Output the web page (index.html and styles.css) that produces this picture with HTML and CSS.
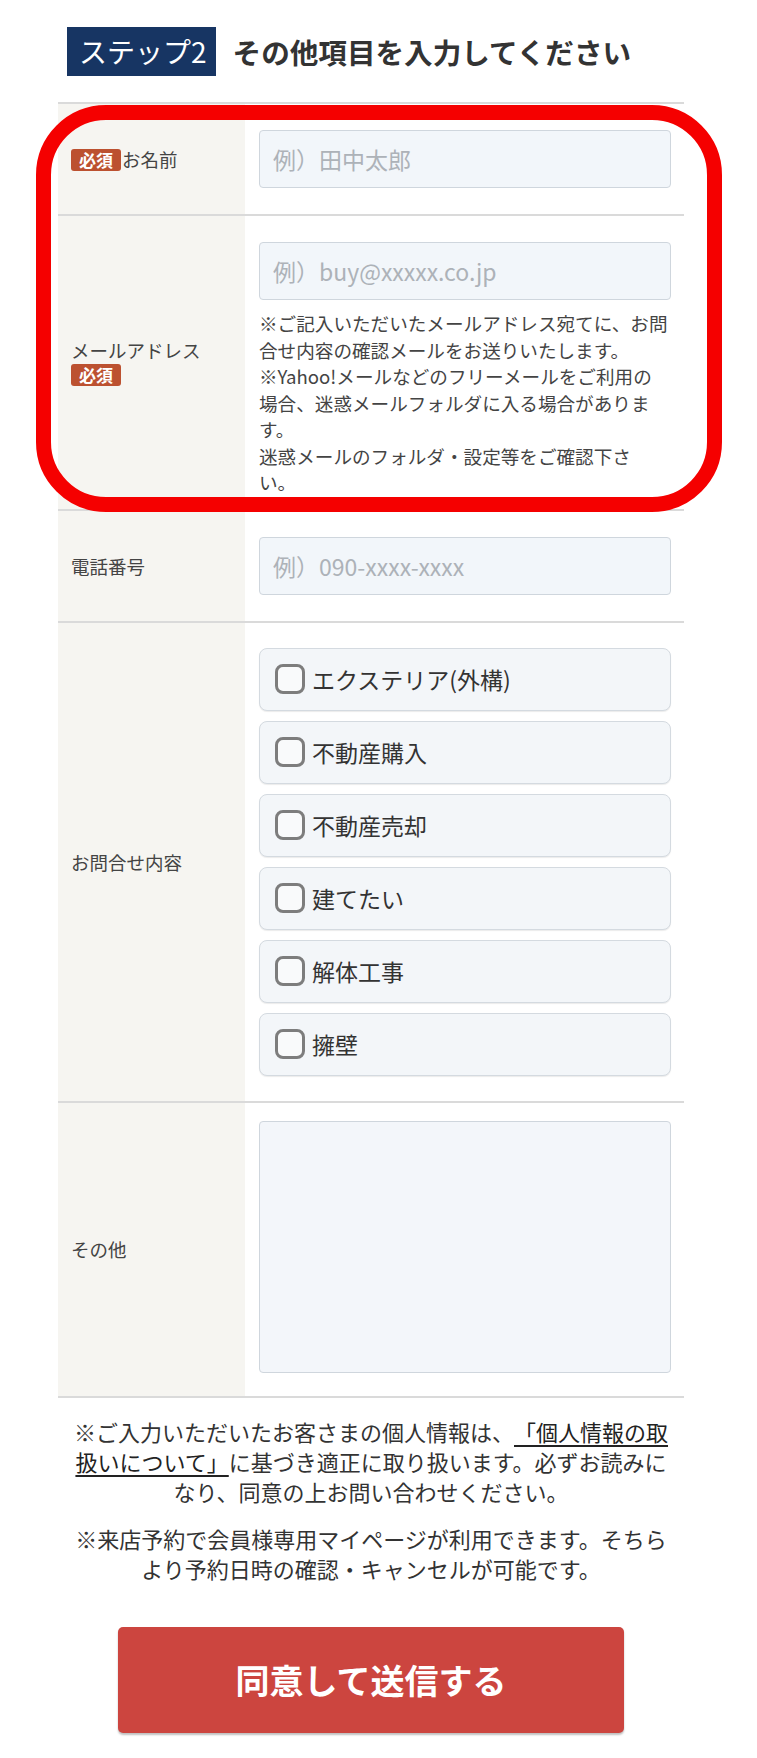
FILE: index.html
```html
<!DOCTYPE html>
<html lang="ja">
    <head>
        <meta charset="UTF-8">
        <meta name="viewport" content="width=device-width, initial-scale=1.0">
        <title>お問い合わせ ステップ2</title>
        <link rel="stylesheet" href="styles.css">
    </head>
    <body>
        <div class="page">
            <h2 class="step-head">
                <span class="step-no">ステップ2</span>
                <span class="step-title">その他項目を入力してください</span>
            </h2>

            <div class="form-table">
                <div class="row">
                    <div class="label">
                        <div><span class="req req-inline">必須</span>お名前</div>
                    </div>
                    <div class="field">
                        <input class="text" type="text" placeholder="例）田中太郎">
                    </div>
                </div>

                <div class="row">
                    <div class="label">
                        <div>メールアドレス</div>
                        <span class="req">必須</span>
                    </div>
                    <div class="field">
                        <input class="text" type="email" placeholder="例）buy@xxxxx.co.jp">
                        <p class="note">※ご記入いただいたメールアドレス宛てに、お問<br>合せ内容の確認メールをお送りいたします。<br>※Yahoo!メールなどのフリーメールをご利用の<br>場合、迷惑メールフォルダに入る場合がありま<br>す。<br>迷惑メールのフォルダ・設定等をご確認下さ<br>い。</p>
                    </div>
                </div>

                <div class="row">
                    <div class="label">
                        <div>電話番号</div>
                    </div>
                    <div class="field">
                        <input class="text" type="tel" placeholder="例）090-xxxx-xxxx">
                    </div>
                </div>

                <div class="row">
                    <div class="label">
                        <div>お問合せ内容</div>
                    </div>
                    <div class="field">
                        <ul class="checks">
                            <li><label class="check"><input type="checkbox"><span class="box"></span>エクステリア(外構)</label></li>
                            <li><label class="check"><input type="checkbox"><span class="box"></span>不動産購入</label></li>
                            <li><label class="check"><input type="checkbox"><span class="box"></span>不動産売却</label></li>
                            <li><label class="check"><input type="checkbox"><span class="box"></span>建てたい</label></li>
                            <li><label class="check"><input type="checkbox"><span class="box"></span>解体工事</label></li>
                            <li><label class="check"><input type="checkbox"><span class="box"></span>擁壁</label></li>
                        </ul>
                    </div>
                </div>

                <div class="row">
                    <div class="label">
                        <div>その他</div>
                    </div>
                    <div class="field">
                        <textarea class="memo"></textarea>
                    </div>
                </div>

                <!-- red marker drawn over the required fields -->
                <div class="highlight"></div>
            </div>

            <div class="notes">
                <p>※ご入力いただいたお客さまの個人情報は、<a href="#">「個人情報の取扱いについて」</a>に基づき適正に取り扱います。必ずお読みになり、同意の上お問い合わせください。</p>
                <p>※来店予約で会員様専用マイページが利用できます。そちらより予約日時の確認・キャンセルが可能です。</p>
            </div>

            <div class="submit-wrap">
                <button type="submit" class="submit">同意して送信する</button>
            </div>
        </div>
    </body>
</html>
```

FILE: styles.css
```css
body, html {
    margin: 0;
    background: #fff;
    font-family: "Noto Sans CJK JP", "Noto Sans", sans-serif;
    color: #333;
}
.page {
    width: 626px;
    padding: 27px 0 20px 58px;
}

/* heading */
.step-head {
    display: flex;
    align-items: center;
    gap: 17px;
    margin: 0 0 26px 9px;
    font-weight: normal;
}
.step-no {
    background-color: #173563;
    color: #fff;
    font-size: 28px;
    line-height: 49px;
    padding: 0 9px 0 12px;
}
.step-title {
    font-size: 28.6px;
    font-weight: bold;
    color: #333;
}

/* table */
.form-table {
    position: relative;
    border-bottom: 2px solid #dadada;
}
.row {
    display: grid;
    grid-template-columns: 187px 1fr;
    border-top: 2px solid #dadada;
}
.label {
    display: flex;
    flex-direction: column;
    justify-content: center;
    align-items: flex-start;
    padding: 0 8px 0 13px;
    background-color: #f6f5f1;
    font-size: 18.5px;
    line-height: 22px;
    color: #444;
}
.req {
    display: inline-block;
    margin-top: 3px;
    padding: 0 8px;
    background-color: #bc5130;
    color: #fff;
    font-size: 17px;
    font-weight: bold;
    line-height: 22px;
    border-radius: 3px;
}
.req-inline {
    margin: 0 1px 0 0;
}
.field {
    padding: 13px 13px 13px 14px;
}
.text {
    display: block;
    box-sizing: border-box;
    width: 100%;
    height: 58px;
    margin: 13px 0;
    padding: 0 13px;
    border: 1.5px solid #cfd6dd;
    border-radius: 4px;
    background-color: #f2f6fa;
    font-family: inherit;
    font-size: 23px;
    color: #333;
}
.text::placeholder {
    color: #adb2b8;
}
.note {
    margin: -3px 0 0;
    font-size: 18.6px;
    line-height: 26.5px;
    color: #444;
}

/* checkboxes */
.checks {
    list-style: none;
    margin: 12px 0;
    padding: 0;
    display: flex;
    flex-direction: column;
    gap: 10px;
}
.check {
    display: flex;
    align-items: center;
    height: 63px;
    box-sizing: border-box;
    padding-left: 15px;
    border: 1.5px solid #d4dae0;
    border-radius: 8px;
    background-color: #f3f6f9;
    box-shadow: 0 1px 1px rgba(0, 0, 0, 0.08);
    font-size: 23px;
    color: #333;
    cursor: pointer;
}
.check input {
    display: none;
}
.check .box {
    width: 30px;
    height: 30px;
    box-sizing: border-box;
    margin-right: 7px;
    border: 3px solid #7d7d7d;
    border-radius: 8px;
    background-color: #f9fafb;
}

.memo {
    display: block;
    box-sizing: border-box;
    width: 100%;
    height: 252px;
    margin: 5px 0 10px;
    border: 1.5px solid #cfd6dd;
    border-radius: 4px;
    background-color: #f3f6fa;
    resize: none;
}

.highlight {
    position: absolute;
    left: -22px;
    top: 3px;
    width: 686px;
    height: 407px;
    box-sizing: border-box;
    border: 15px solid #f50000;
    border-radius: 70px;
    pointer-events: none;
}

/* notes and button */
.notes {
    width: 598px;
    margin: 18px auto 0;
    text-align: center;
    font-size: 22px;
    line-height: 30px;
    color: #333;
    text-spacing-trim: space-all;
}
.notes p {
    margin: 0 0 17px;
}
.notes a {
    color: #222;
    text-decoration: underline;
    text-decoration-thickness: 2px;
    text-underline-offset: 4px;
}
.submit-wrap {
    display: flex;
    justify-content: center;
    margin-top: 44px;
}
.submit {
    width: 506px;
    height: 106px;
    border: none;
    border-radius: 5px;
    background-color: #cc453f;
    box-shadow: 0 2px 2px rgba(0, 0, 0, 0.25);
    color: #fff;
    font-family: inherit;
    font-size: 34px;
    font-weight: bold;
    cursor: pointer;
}
```
